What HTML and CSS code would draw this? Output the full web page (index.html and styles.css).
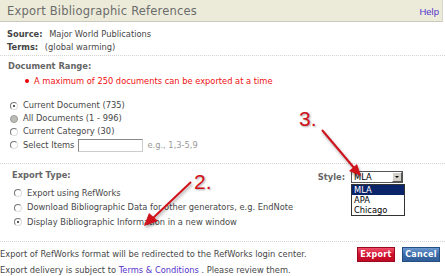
FILE: index.html
```html
<!DOCTYPE html>
<html lang="en">
  <head>
    <meta charset="UTF-8" />
    <title>Export Bibliographic References</title>
    <link rel="stylesheet" href="styles.css">
  </head>
  <body>
    <div class="page">
      <div class="header">
        <h1>Export Bibliographic References</h1>
        <a href="#" class="help">Help</a>
      </div>

      <div class="info">
        <div class="row"><b>Source:</b> <span>Major World Publications</span></div>
        <div class="row"><b>Terms:</b> <span>(global warming)</span></div>
      </div>

      <div class="section range">
        <div class="label">Document Range:</div>
        <ul class="notes">
          <li>A maximum of 250 documents can be exported at a time</li>
        </ul>
        <div class="options">
          <label class="opt"><span class="radio checked"></span>Current Document (735)</label>
          <label class="opt"><span class="radio disabled"></span>All Documents (1 - 996)</label>
          <label class="opt"><span class="radio"></span>Current Category (30)</label>
          <label class="opt"><span class="radio"></span>Select Items <span class="items"></span> <span class="hint">e.g., 1,3-5,9</span></label>
        </div>
      </div>

      <div class="section type">
        <div class="type-left">
          <div class="label">Export Type:</div>
          <div class="options">
            <label class="opt"><span class="radio"></span>Export using RefWorks</label>
            <label class="opt"><span class="radio"></span>Download Bibliographic Data for other generators, e.g. EndNote</label>
            <label class="opt"><span class="radio checked"></span>Display Bibliographic Information in a new window</label>
          </div>
        </div>
        <div class="style">
          <span class="label">Style:</span>
          <div class="select">
            <span class="value">MLA</span>
            <span class="drop"></span>
            <ul class="menu">
              <li class="active">MLA</li>
              <li>APA</li>
              <li>Chicago</li>
            </ul>
          </div>
        </div>
      </div>

      <div class="footer">
        <div class="notice">
          <p>Export of RefWorks format will be redirected to the RefWorks login center.</p>
          <p>Export delivery is subject to <a href="#">Terms &amp; Conditions</a> . Please review them.</p>
        </div>
        <div class="buttons">
          <button class="btn export">Export</button>
          <button class="btn cancel">Cancel</button>
        </div>
      </div>

      <!-- callouts -->
      <div class="callout c2">2.</div>
      <div class="callout c3">3.</div>
      <svg class="arrows" width="445" height="276" viewBox="0 0 445 276">
        <g stroke="#d0121b" stroke-width="2" fill="#d0121b">
          <line x1="191" y1="182" x2="152" y2="219" />
          <polygon points="144,226 149,213 158,221" stroke="none" />
          <line x1="322" y1="130" x2="355" y2="169" />
          <polygon points="361,176 349,171 357,164" stroke="none" />
        </g>
      </svg>
    </div>
  </body>
</html>
```

FILE: styles.css
```css
* {
  margin: 0;
  padding: 0;
  box-sizing: border-box;
}
body {
  font-family: "DejaVu Sans", Verdana, sans-serif;
  font-size: 8.3px;
  color: #474747;
  background: #fff;
}
.page {
  position: relative;
  width: 445px;
  height: 276px;
  overflow: hidden;
}
.header {
  height: 22px;
  background: #ecebd9;
  border-bottom: 1px solid #c9c9c0;
  border-right: 1px solid #d6d6cc;
  width: 443px;
  display: flex;
  justify-content: space-between;
  align-items: center;
  padding: 0 3px 0 7px;
}
.header h1 {
  font-size: 11.5px;
  font-weight: normal;
  letter-spacing: 0.2px;
  color: #6b6b6b;
}
.help {
  color: #5533cc;
  text-decoration: none;
  font-family: "Liberation Sans", Arial, sans-serif;
  font-size: 9.5px;
  margin-top: 2px;
}
.info {
  padding: 6px 0 1px 7px;
  border-bottom: 1px dotted #d4d4d4;
}
.row {
  line-height: 13px;
}
.row b {
  color: #444;
  margin-right: 4px;
}
.label {
  font-weight: bold;
  color: #666;
  line-height: 13px;
}
.section {
  border-bottom: 1px dotted #d4d4d4;
}
.range {
  padding: 4px 0 11px 8px;
}
.notes {
  list-style: none;
  margin: 2px 0 11px 17px;
}
.notes li {
  color: #f01010;
  line-height: 13px;
  position: relative;
  padding-left: 9px;
}
.notes li::before {
  content: "";
  position: absolute;
  left: 0;
  top: 4px;
  width: 4px;
  height: 4px;
  border-radius: 50%;
  background: #e00;
}
.opt {
  display: flex;
  align-items: center;
  line-height: 13px;
  height: 13px;
}
.range .opt:last-child {
  height: 14px;
}
.radio {
  width: 8px;
  height: 8px;
  border-radius: 50%;
  border: 1px solid #777;
  border-right-color: #ddd;
  border-bottom-color: #ddd;
  background: #fff;
  margin: 0 5px 0 2px;
  position: relative;
}
.radio.checked::after {
  content: "";
  position: absolute;
  left: 2px;
  top: 2px;
  width: 2px;
  height: 2px;
  border-radius: 50%;
  background: #222;
}
.radio.disabled {
  background: #bdbdb6;
  border-color: #999;
}
.items {
  display: inline-block;
  width: 65px;
  height: 13px;
  border: 1px solid #888;
  border-right-color: #ccc;
  border-bottom-color: #ccc;
  margin-left: 4px;
}
.hint {
  color: #999;
  margin-left: 4px;
}
.type {
  display: flex;
  justify-content: space-between;
  padding: 5px 0 11px 12px;
}
.type .options {
  margin-top: 4px;
}
.type .opt {
  height: 14.5px;
}
.style {
  display: flex;
  align-items: flex-start;
  padding: 2px 42px 0 0;
}
.style .label {
  margin-right: 6px;
}
.select {
  position: relative;
  width: 52px;
  height: 12px;
  border: 1px solid #555;
  background: #fff;
  display: flex;
  align-items: center;
}
.select .value {
  flex: 1;
  padding-left: 2px;
  color: #000;
}
.drop {
  width: 10px;
  height: 10px;
  background: #d4d0c8;
  border: 1px solid #fff;
  border-right-color: #555;
  border-bottom-color: #555;
  position: relative;
}
.drop::after {
  content: "";
  position: absolute;
  left: 2px;
  top: 3px;
  border-left: 2px solid transparent;
  border-right: 2px solid transparent;
  border-top: 2px solid #000;
}
.menu {
  position: absolute;
  left: -1px;
  top: 12px;
  width: 54px;
  list-style: none;
  border: 1px solid #333;
  background: #fff;
}
.menu li {
  color: #000;
  line-height: 10px;
  padding-left: 2px;
}
.menu li.active {
  background: #0a246a;
  color: #fff;
}
.footer {
  display: flex;
  justify-content: space-between;
  padding-top: 4px;
}
.notice p {
  line-height: 16px;
}
.notice a {
  color: #5533cc;
  text-decoration: none;
}
.buttons {
  display: flex;
  gap: 7px;
  padding: 1px 5px 0 0;
}
.btn {
  height: 15px;
  width: 38px;
  border: 1px solid #888;
  color: #fff;
  font-family: "DejaVu Sans", Verdana, sans-serif;
  font-weight: bold;
  font-size: 8px;
  letter-spacing: 0.3px;
}
.export {
  background: linear-gradient(#f0506a, #d0102e 50%, #c00a26);
  border-color: #9a0a1e;
}
.cancel {
  background: linear-gradient(#6f9ad0, #3a6aa8 50%, #305e98);
  border-color: #234f82;
}
.callout {
  position: absolute;
  color: #d0121b;
  font-family: "Liberation Sans", Arial, sans-serif;
  font-size: 21px;
  line-height: 21px;
  text-shadow: 1px 1px 2px rgba(0, 0, 0, 0.35);
}
.c2 {
  left: 194px;
  top: 171px;
}
.c3 {
  left: 299px;
  top: 108px;
}
.arrows {
  position: absolute;
  left: 0;
  top: 0;
  filter: drop-shadow(1px 2px 1.5px rgba(0, 0, 0, 0.35));
}
```
